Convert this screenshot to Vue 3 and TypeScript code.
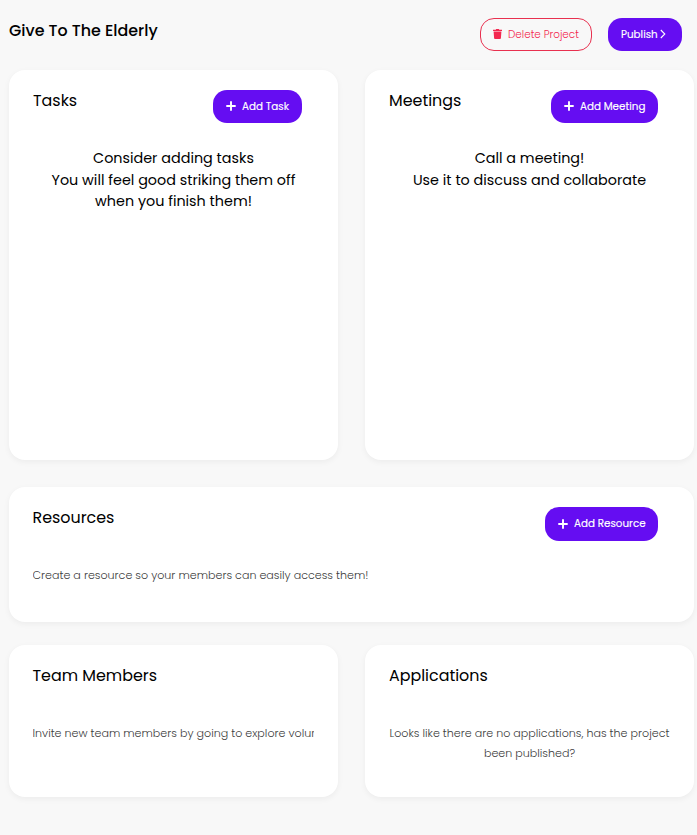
<script setup lang="ts">
interface Panel {
  id: string
  title: string
  action?: string
  tone: 'lead' | 'note' | 'note-centered'
  lines: string[]
}

const panels: Panel[] = [
  {
    id: 'tasks',
    title: 'Tasks',
    action: 'Add Task',
    tone: 'lead',
    lines: ['Consider adding tasks', 'You will feel good striking them off', 'when you finish them!'],
  },
  {
    id: 'meetings',
    title: 'Meetings',
    action: 'Add Meeting',
    tone: 'lead',
    lines: ['Call a meeting!', 'Use it to discuss and collaborate'],
  },
  {
    id: 'resources',
    title: 'Resources',
    action: 'Add Resource',
    tone: 'note',
    lines: ['Create a resource so your members can easily access them!'],
  },
  {
    id: 'members',
    title: 'Team Members',
    tone: 'note',
    lines: ['Invite new team members by going to explore volunteers'],
  },
  {
    id: 'applications',
    title: 'Applications',
    tone: 'note-centered',
    lines: ['Looks like there are no applications, has the project', 'been published?'],
  },
]
</script>

<template>
  <main class="page">
    <header class="topbar">
      <h1 class="project-name">Give To The Elderly</h1>
      <div class="actions">
        <button class="btn btn-outline" type="button">
          <svg class="icon-trash" viewBox="0 0 9 10" aria-hidden="true">
            <path d="M0 .7h2.700L3.200 0h2.600l.5.700H9v1.200H0zM.6 2.500h7.800L7.900 9.200q-.1.800-.9.800H2q-.8 0-.9-.8z" />
          </svg>
          <span>Delete Project</span>
        </button>
        <button class="btn btn-solid btn-publish" type="button">
          <span>Publish</span>
          <svg class="icon-chevron" viewBox="0 0 6 10" aria-hidden="true">
            <path d="M.8 1l4 4-4 4" />
          </svg>
        </button>
      </div>
    </header>

    <div class="grid">
      <section v-for="p in panels" :key="p.id" class="card" :class="p.id">
        <div class="card-head">
          <h2 class="card-title">{{ p.title }}</h2>
          <button v-if="p.action" class="btn btn-solid btn-add" type="button">
            <svg class="icon-plus" viewBox="0 0 10 10" aria-hidden="true">
              <path d="M5 1v8M1 5h8" />
            </svg>
            <span>{{ p.action }}</span>
          </button>
        </div>
        <div class="message" :class="p.tone">
          <p v-for="line in p.lines" :key="line">{{ line }}</p>
        </div>
      </section>
    </div>
  </main>
</template>

<style>
body {
  background: #f8f8f8;
}
</style>

<style scoped>
.page {
  box-sizing: border-box;
  width: 697px;
  height: 835px;
  padding: 18px 3px 0 9px;
  overflow: hidden;
  background: #f8f8f8;
  color: #000;
  font-family: Poppins, Inter, sans-serif;
}

.topbar {
  display: flex;
  justify-content: space-between;
  height: 52px;
  padding-right: 12px;
}

h1,
h2,
p {
  margin: 0;
}

.project-name {
  font-size: 15.9px;
  font-weight: 500;
  line-height: 26px;
}

.actions {
  display: flex;
  gap: 16px;
}

.btn {
  box-sizing: border-box;
  display: flex;
  align-items: center;
  height: 33px;
  padding: 0 13px;
  border: 0;
  border-radius: 14px;
  font-family: inherit;
  font-size: 10.35px;
  font-weight: 400;
  line-height: 16px;
  white-space: nowrap;
}

.btn-outline {
  width: 112px;
  padding: 0 12px;
  border: 1px solid #e8304f;
  background: transparent;
  color: #f32850;
  font-size: 10.4px;
  font-weight: 300;
}

.btn-solid {
  background: #650df2;
  color: #fff;
  -webkit-text-stroke: 0.15px #fff;
}

.btn-publish {
  width: 74px;
  gap: 2px;
}

.btn-add {
  gap: 6px;
}

.tasks .btn-add {
  width: 89px;
}

.meetings .btn-add {
  width: 107px;
}

.resources .btn-add {
  width: 113px;
  height: 34px;
}

.icon-trash,
.icon-chevron,
.icon-plus {
  flex: none;
  height: 10px;
  margin-bottom: 1px;
}

.icon-trash {
  width: 9px;
  margin-right: 6px;
  fill: currentColor;
}

.icon-chevron {
  width: 6px;
  fill: none;
  stroke: currentColor;
  stroke-width: 1.1;
}

.icon-plus {
  width: 10px;
  stroke: currentColor;
  stroke-width: 1.9;
  stroke-linecap: round;
}

.grid {
  display: grid;
  grid-template-columns: 329px 329px;
  grid-template-rows: 390px 139px 152px;
  gap: 23px 27px;
}

.card {
  box-sizing: border-box;
  min-width: 0;
  padding: 20px 24px 0;
  border-radius: 16px;
  background: #fff;
  box-shadow: 0 2px 6px rgba(0, 0, 0, 0.05);
}

.resources {
  grid-column: 1 / 3;
  margin-top: 4px;
}

.resources,
.members {
  padding-left: 23.5px;
}

.card-head {
  display: flex;
  justify-content: space-between;
  height: 58px;
  padding-right: 12px;
}

.card-title {
  font-size: 15.9px;
  font-weight: 400;
  line-height: 22px;
}

.message p {
  white-space: nowrap;
}

.lead {
  font-size: 14.35px;
  line-height: 21.6px;
  text-align: center;
}

.note,
.note-centered {
  overflow: hidden;
  color: #3c3c3c;
  font-size: 11.1px;
  font-weight: 300;
  line-height: 20px;
}

.note-centered {
  text-align: center;
}
</style>
